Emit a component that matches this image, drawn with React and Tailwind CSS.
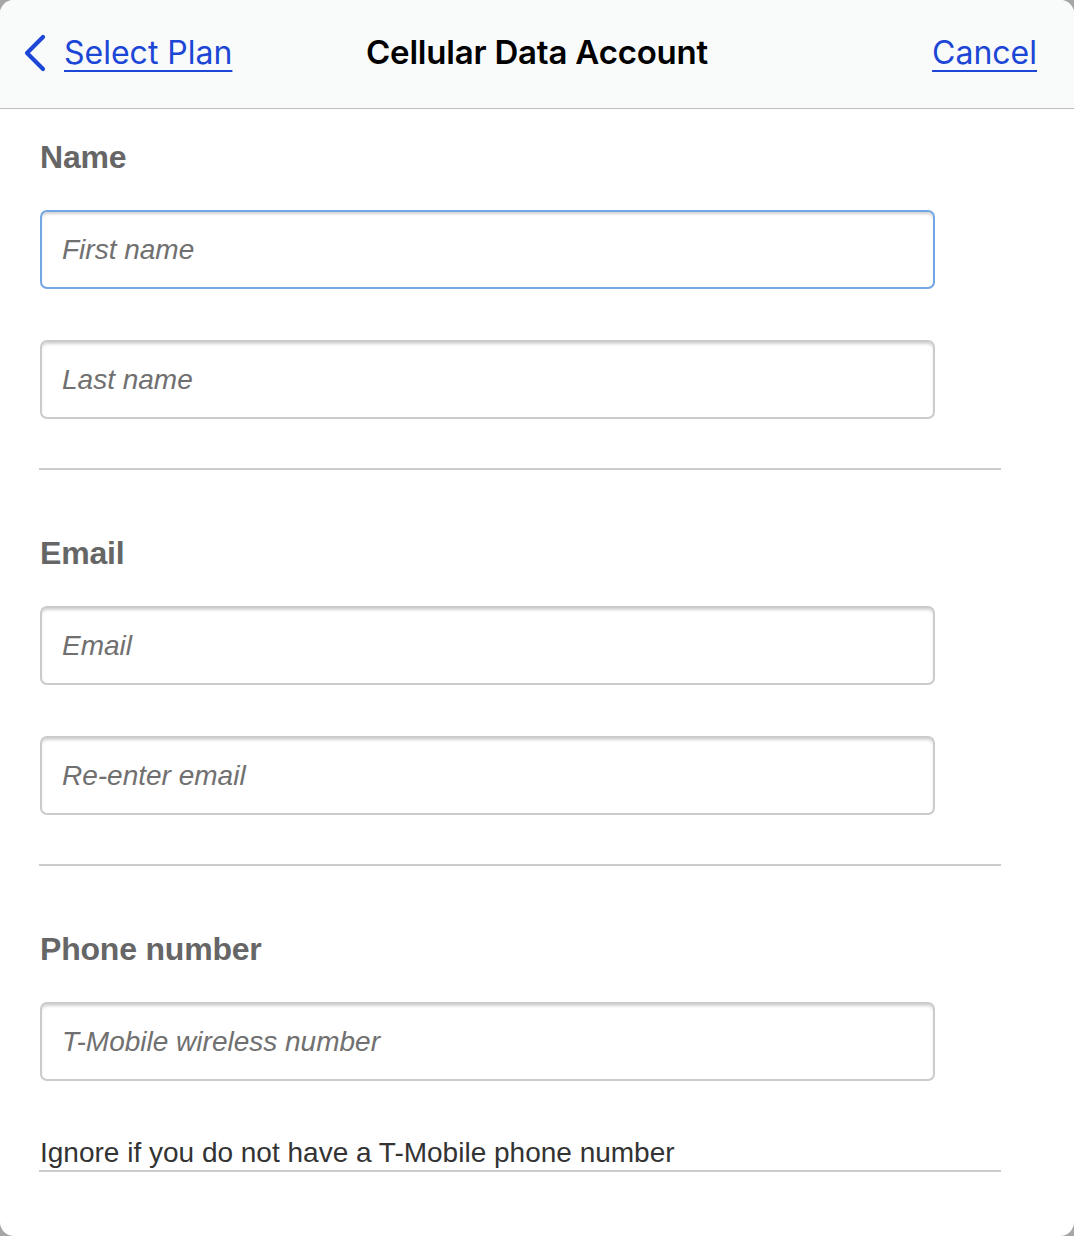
export default function App() {
  const inputCls =
    "block w-[895px] h-[79px] rounded-[7px] border-2 bg-white pl-[20px] text-[28px] outline-none shadow-[inset_0_3px_3px_-1px_rgba(0,0,0,0.18)] placeholder:italic placeholder:text-[#707070] font-['Liberation_Sans',Arial,sans-serif]";
  const labelCls =
    "text-[32px] leading-[38px] font-bold text-[#666666] tracking-[-0.2px] font-['Liberation_Sans',Arial,sans-serif]";
  return (
    <div className="w-[1074px] h-[1236px] bg-[#a6a6a6]">
      <div className="w-full h-full bg-white rounded-[14px] overflow-hidden flex flex-col">
        <div className="h-[109px] shrink-0 bg-[#f9fafa] border-b border-[#bdbdbd] grid grid-cols-[1fr_auto_1fr] items-center pb-[3px] font-['Inter',sans-serif]">
          <div className="flex items-center pl-[22px]">
            <svg width="26" height="38" viewBox="0 0 26 38" className="mt-[1px]">
              <path d="M21 3 L5 19 L21 35" fill="none" stroke="#1c46d6" strokeWidth="4.2" strokeLinecap="round" strokeLinejoin="round" />
            </svg>
            <a className="ml-[16px] text-[32px] text-[#1c46d6] underline underline-offset-[6px] decoration-2 cursor-pointer">Select Plan</a>
          </div>
          <div className="text-[33px] font-semibold text-black tracking-[-0.2px]">Cellular Data Account</div>
          <div className="flex justify-end pr-[37px]">
            <a className="text-[32px] text-[#1c46d6] underline underline-offset-[6px] decoration-2 cursor-pointer">Cancel</a>
          </div>
        </div>

        <div className="pl-[40px] pt-[29px]">
          <div className={labelCls}>Name</div>
          <input className={`${inputCls} mt-[34px] border-[#73a7e3]`} placeholder="First name" />
          <input className={`${inputCls} mt-[51px] border-[#cbcbcb]`} placeholder="Last name" />
          <div className="w-[962px] -ml-px mt-[49px] h-[2px] bg-[#cccccc]" />

          <div className={`${labelCls} mt-[64px]`}>Email</div>
          <input className={`${inputCls} mt-[34px] border-[#cbcbcb]`} placeholder="Email" />
          <input className={`${inputCls} mt-[51px] border-[#cbcbcb]`} placeholder="Re-enter email" />
          <div className="w-[962px] -ml-px mt-[49px] h-[2px] bg-[#cccccc]" />

          <div className={`${labelCls} mt-[64px]`}>Phone number</div>
          <input className={`${inputCls} mt-[34px] border-[#cbcbcb]`} placeholder="T-Mobile wireless number" />

          <div className="w-[962px] -ml-px mt-[56px] pl-px pb-[1px] border-b-2 border-[#cccccc] text-[28px] leading-[32px] text-[#333333] font-['Liberation_Sans',Arial,sans-serif]">
            Ignore if you do not have a T-Mobile phone number
          </div>
        </div>
      </div>
    </div>
  );
}
